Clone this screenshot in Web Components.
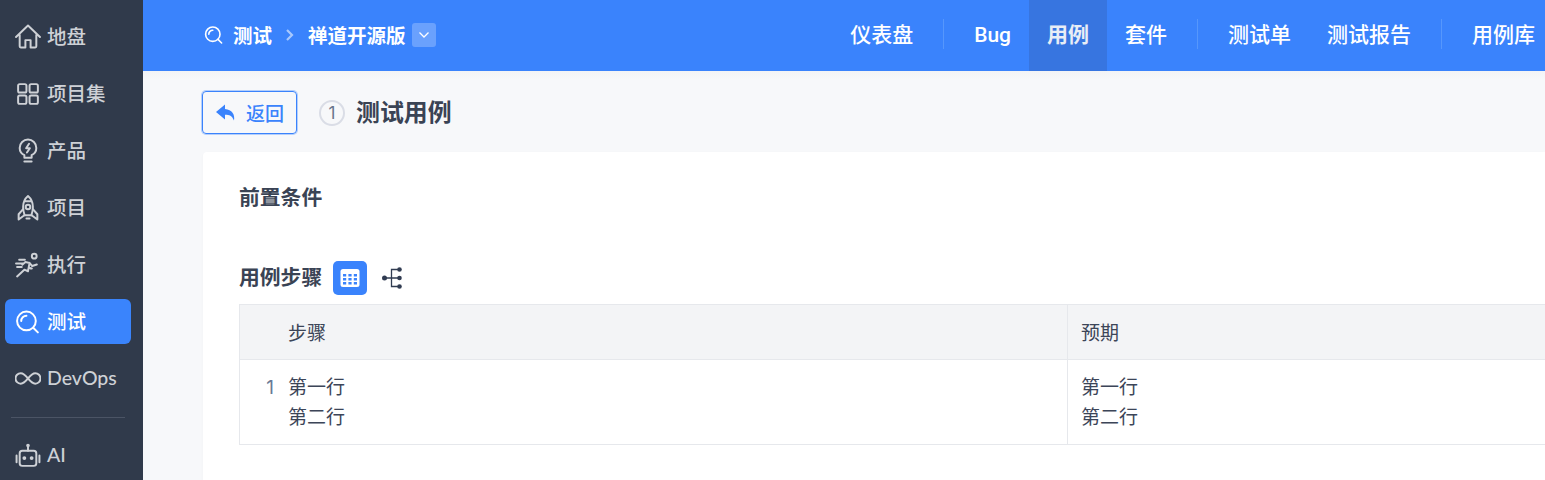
<!DOCTYPE html>
<html lang="zh">
<head>
<meta charset="utf-8">
<title>测试用例</title>
<style>
  html, body { margin: 0; height: 100%; overflow: hidden; }
  body {
    display: flex; height: 480px;
    font-family: Inter, "Noto Sans CJK SC", sans-serif;
    color: #313c52; background: #f7f8fa;
  }
</style>
</head>
<body>
<zt-sidebar></zt-sidebar>
<div style="flex:1;min-width:0;display:flex;flex-direction:column">
  <zt-header></zt-header>
  <zt-page></zt-page>
</div>

<script>
const ICONS = {
  home: '<path d="M1 12.500 12.500 1.500 24 12.500M4.500 10v11.500a1 1 0 0 0 1 1H10v-7h5v7h4.500a1 1 0 0 0 1-1V10"/>',
  grid: '<rect x="3" y="3" width="8" height="8" rx="1.500"/><rect x="14" y="3" width="8" height="8" rx="1.500"/><rect x="3" y="14" width="8" height="8" rx="1.500"/><rect x="14" y="14" width="8" height="8" rx="1.500"/>',
  bulb: '<path d="M9 19v-2.500C6.200 15 4.500 12.500 4.500 9.500a8 8 0 0 1 16 0c0 3-1.700 5.500-4.500 7V19z"/><path d="M13.500 5.500l-2.800 4.300h3.600L11.500 14M9 22.500h7"/>',
  rocket: '<path d="M12.500 1c3.200 2.700 4.700 6.300 4.700 10.500 0 3-.5 5.500-1.500 8H9.300c-1-2.500-1.500-5-1.500-8C7.800 7.300 9.300 3.700 12.500 1zM9.500 6h6"/><circle cx="12.500" cy="11.500" r="2.200"/><path d="M7.800 13.500 3.500 18.500V23.500l5.500-4M17.200 13.500l4.300 5V23.500l-5.500-4M11 22.500h3"/>',
  run: '<circle cx="18.500" cy="4" r="2.300"/><path d="M2 23.500l7-6.500 3.500 1.500 1.500-8-4-.8-3 2.500M14 10.500l2.500 3 4.500-1.500M13.200 15l3 .8-1.200 0M1 11h6.500M2 14.500h4.500M4 7.500h5.500"/>',
  search: '<circle cx="11" cy="11.500" r="9"/><path d="M17.500 18l4.500 4.500M6 11.500A5 5 0 0 1 11 6.500"/>',
  infinity: '<path d="M12.500 12c-2.500-3.200-4.500-5-7-5a5 5 0 0 0 0 10c2.500 0 4.500-1.800 7-5zm0 0c2.500 3.200 4.500 5 7 5a5 5 0 0 0 0-10c-2.500 0-4.500 1.800-7 5z"/>',
  robot: '<rect x="4.500" y="7.500" width="16" height="14.500" rx="2.500"/><path d="M12.500 7.500V3.500M1.500 12v6.500M23.500 12v6.500"/><circle cx="12.500" cy="2.500" r=".8"/><circle cx="9" cy="14.500" r=".9"/><circle cx="16" cy="14.500" r=".9"/>'
};

class ZtIcon extends HTMLElement {
  connectedCallback() {
    const size = this.getAttribute('size') || 26;
    const sw = this.getAttribute('stroke') || 1.9;
    this.attachShadow({ mode: 'open' }).innerHTML = `
      <style>:host { display: inline-flex; flex: none; } svg { display: block; }</style>
      <svg width="${size}" height="${size}" viewBox="0 0 25 25" fill="none" stroke="currentColor"
        stroke-width="${sw}" stroke-linecap="round" stroke-linejoin="round">${ICONS[this.getAttribute('name')]}</svg>`;
  }
}
customElements.define('zt-icon', ZtIcon);

class ZtSidebar extends HTMLElement {
  constructor() {
    super();
    const items = [
      ['home', '地盘'], ['grid', '项目集'], ['bulb', '产品'], ['rocket', '项目'],
      ['run', '执行'], ['search', '测试', true], ['infinity', 'DevOps']
    ];
    this.attachShadow({ mode: 'open' }).innerHTML = `
      <style>
        :host { display: block; width: 143px; flex: none; background: #303a4b; padding-top: 14px; box-sizing: border-box; }
        .item {
          display: flex; align-items: center; gap: 6px;
          height: 45px; margin: 0 12px 12px 5px; padding-left: 10px;
          border-radius: 6px; color: #ced1d6; font-size: 19.500px; font-weight: 500;
          font-family: Lato, "Noto Sans CJK SC", sans-serif;
        }
        .item span { margin-top: -3px; }
        .item.active { background: #3a84fc; color: #fff; }
        hr { border: 0; height: 1px; background: #4b5465; margin: 16px 18px 15px 11px; }
        .item.ai { margin-bottom: 0; }
      </style>
      ${items.map(([icon, label, active]) => `
        <div class="item ${active ? 'active' : ''}"><zt-icon name="${icon}"></zt-icon><span>${label}</span></div>
      `).join('')}
      <hr>
      <div class="item ai"><zt-icon name="robot"></zt-icon><span>AI</span></div>`;
  }
}
customElements.define('zt-sidebar', ZtSidebar);

class ZtHeader extends HTMLElement {
  constructor() {
    super();
    const nav = [
      ['仪表盘'], null, ['Bug', false, 'latin'], ['用例', true], ['套件'], null, ['测试单'], ['测试报告'], null, ['用例库']
    ];
    this.attachShadow({ mode: 'open' }).innerHTML = `
      <style>
        :host { display: flex; align-items: center; height: 71px; flex: none; background: #3a83fc; color: #fff; font-weight: 500; overflow: hidden; }
        .crumbs { display: flex; align-items: center; padding-left: 61px; font-size: 19.500px; margin-top: -2px; font-weight: 600; }
        .crumbs span { white-space: nowrap; }
        .sep { width: 36px; display: flex; justify-content: center; color: #a8c8fd; }
        .drop {
          width: 24px; height: 24px; margin-left: 6px; border-radius: 3px;
          background: #6aa1fd; display: flex; align-items: center; justify-content: center;
        }
        nav {
          margin-left: auto; margin-right: -8px; display: flex; align-items: center; height: 100%; font-size: 21px;
          font-family: Roboto, "Noto Sans CJK SC", sans-serif;
        }
        .tab { height: 100%; display: flex; align-items: center; padding: 0 18px; white-space: nowrap; }
        .tab span { margin-top: -5px; }
        .tab span.latin { margin-top: -2px; }
        .tab.active { background: #3775e0; color: #e8edf6; font-weight: 700; }
        .div { width: 1px; height: 30px; background: #5697fc; margin: -3px 12px 0; }
      </style>
      <div class="crumbs">
        <zt-icon name="search" size="20" stroke="2"></zt-icon>
        <span style="margin-left:9px">测试</span>
        <div class="sep"><svg width="10" height="14" viewBox="0 0 10 14" fill="none" stroke="currentColor" stroke-width="2.200"><path d="M2 2l5 5-5 5"/></svg></div>
        <span>禅道开源版</span>
        <div class="drop"><svg width="12" height="8" viewBox="0 0 12 8" fill="none" stroke="#fff" stroke-width="1.300"><path d="M1.500 1.500 6 6l4.500-4.500"/></svg></div>
      </div>
      <nav>
        ${nav.map(n => n ? `<div class="tab ${n[1] ? 'active' : ''}"><span class="${n[2] || ''}">${n[0]}</span></div>` : '<div class="div"></div>').join('')}
      </nav>`;
  }
}
customElements.define('zt-header', ZtHeader);

class ZtStepsTable extends HTMLElement {
  constructor() {
    super();
    this.attachShadow({ mode: 'open' }).innerHTML = `
      <style>
        :host { display: grid; grid-template-columns: 827px 1fr; font-size: 19px; color: #3c4558; border: 1px solid #e6e8ec; border-right: 0; width: 1400px; }
        .th { height: 55px; box-sizing: border-box; padding-bottom: 2px; background: #f3f4f6; border-bottom: 1px solid #e6e8ec; display: flex; align-items: center; }
        .td { height: 84px; display: flex; line-height: 30px; padding-top: 13px; box-sizing: border-box; }
        .first { padding-left: 48px; }
        .second { border-left: 1px solid #e6e8ec; padding-left: 13px; }
        .td.first { padding-left: 0; }
        .num { width: 34px; margin-right: 14px; text-align: right; color: #6a7a96; }
      </style>
      <div class="th first">步骤</div>
      <div class="th second">预期</div>
      <div class="td first"><span class="num">1</span><div>第一行<br>第二行</div></div>
      <div class="td second"><div>第一行<br>第二行</div></div>`;
  }
}
customElements.define('zt-steps-table', ZtStepsTable);

class ZtPage extends HTMLElement {
  constructor() {
    super();
    this.attachShadow({ mode: 'open' }).innerHTML = `
      <style>
        :host { display: block; flex: 1; min-height: 0; overflow: hidden; padding: 19px 0 0 58px; background: linear-gradient(#f3f4f6, #f7f8fa 8px); }
        .bar { display: flex; align-items: center; height: 45px; margin-bottom: 17px; }
        .back {
          display: flex; align-items: center; gap: 10px; width: 95px; height: 43px; margin-left: 1px; box-sizing: border-box; padding-left: 13px;
          border: 1px solid #3a83fc; box-shadow: 0 0 0 1px rgba(58,131,252,.35); border-radius: 4px; color: #3a83fc; font-size: 19px; font-weight: 500;
        }
        .badge {
          width: 26px; height: 26px; border-radius: 50%; border: 2px solid #dadde6; box-sizing: border-box;
          margin-left: 22px; display: flex; align-items: center; justify-content: center; color: #68758c; font-size: 17px;
        }
        h1 { margin: -4px 0 0 11px; font-size: 23.900px; font-weight: 700; color: #3a4354; }
        .card { background: #fff; height: 400px; border-radius: 4px 0 0 0; padding: 30px 0 0 36px; box-shadow: 0 1px 3px rgba(0,0,0,.03); margin-left: 2px; }
        h2 { margin: 0; font-size: 20.800px; font-weight: 700; color: #3a4354; line-height: 32px; }
        .head { display: flex; align-items: center; margin-top: 47px; height: 34px; margin-bottom: 9px; }
        .toggle { width: 34px; height: 34px; border-radius: 5px; background: #3a83fc; margin-left: 11px; display: flex; align-items: center; justify-content: center; }
        .tree { margin-left: 14px; display: flex; }
      </style>
      <div class="bar">
        <div class="back">
          <svg width="20" height="18" viewBox="0 0 20 18"><path fill="#3a83fc" d="M9 .5 0 8l9 7.500v-4.800c4.500 0 7 1 9 5.800 1-6-2-11-9-11.500z"/></svg>
          <span>返回</span>
        </div>
        <div class="badge">1</div>
        <h1>测试用例</h1>
      </div>
      <div class="card">
        <h2>前置条件</h2>
        <div class="head">
          <h2>用例步骤</h2>
          <div class="toggle">
            <svg width="20" height="20" viewBox="0 0 20 20"><rect x="0.500" y="1" width="19" height="18" rx="2.500" fill="#fff"/><g fill="#3a83fc">
              <rect x="3" y="6" width="3.200" height="2.500"/><rect x="8.400" y="6" width="3.200" height="2.500"/><rect x="13.800" y="6" width="3.200" height="2.500"/>
              <rect x="3" y="10" width="3.200" height="2.500"/><rect x="8.400" y="10" width="3.200" height="2.500"/><rect x="13.800" y="10" width="3.200" height="2.500"/>
              <rect x="3" y="14" width="3.200" height="2.500"/><rect x="8.400" y="14" width="3.200" height="2.500"/><rect x="13.800" y="14" width="3.200" height="2.500"/></g></svg>
          </div>
          <div class="tree">
            <svg width="22" height="24" viewBox="0 0 22 24" fill="#313c52" stroke="#313c52" stroke-width="1.300"><circle cx="3.500" cy="12" r="2.500" stroke="none"/><circle cx="18.500" cy="3.500" r="2.300" stroke="none"/><circle cx="18.500" cy="12" r="2.300" stroke="none"/><circle cx="18.500" cy="20.500" r="2.300" stroke="none"/><path fill="none" d="M3.500 12H18M18 3.500H10.500V20.500H18"/></svg>
          </div>
        </div>
        <zt-steps-table></zt-steps-table>
      </div>`;
  }
}
customElements.define('zt-page', ZtPage);
</script>
</body>
</html>
